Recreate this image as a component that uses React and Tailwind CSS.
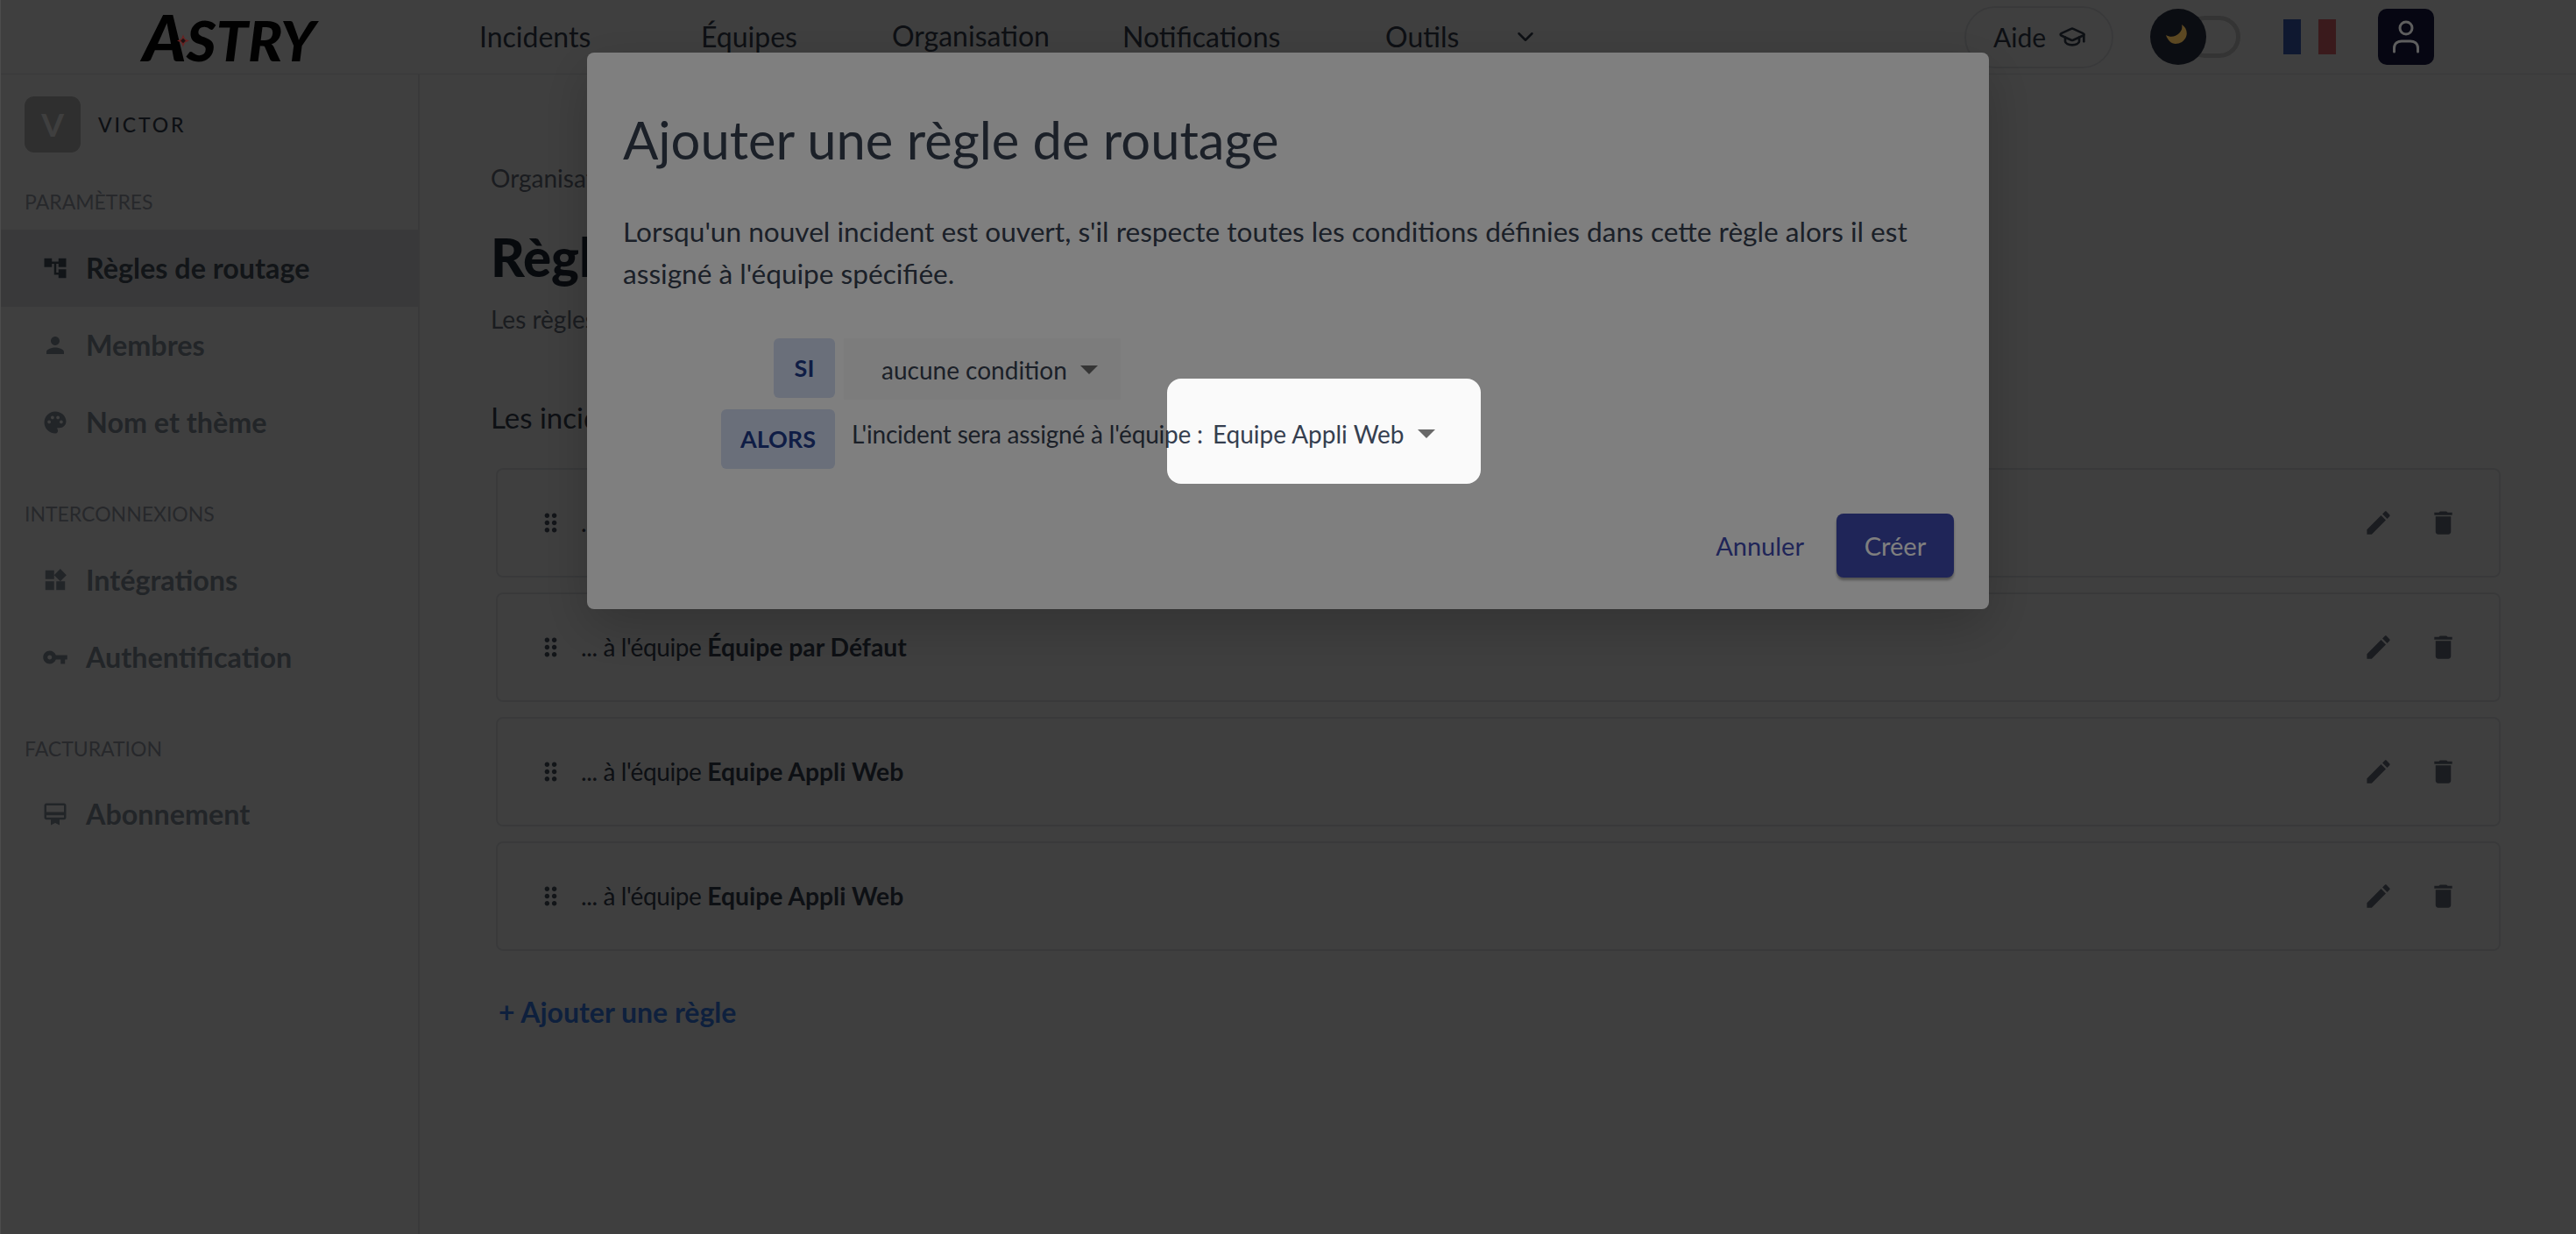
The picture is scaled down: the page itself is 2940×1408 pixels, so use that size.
import { ChevronDown, GraduationCap } from 'lucide-react';

const iconPaths = {
  tree: 'M22 11V3h-7v3H9V3H2v8h7V8h2v10h4v3h7v-8h-7v3h-2V8h2v3z',
  person: 'M12 12c2.21 0 4-1.79 4-4s-1.79-4-4-4-4 1.79-4 4 1.79 4 4 4zm0 2c-2.67 0-8 1.34-8 4v2h16v-2c0-2.66-5.33-4-8-4z',
  palette: 'M12 2C6.49 2 2 6.49 2 12s4.49 10 10 10c1.38 0 2.5-1.12 2.5-2.5 0-.61-.23-1.2-.64-1.67-.08-.1-.13-.21-.13-.33 0-.28.22-.5.5-.5H16c3.31 0 6-2.69 6-6 0-4.96-4.49-9-10-9zm5.5 11c-.83 0-1.5-.67-1.5-1.5s.67-1.5 1.5-1.5 1.5.67 1.5 1.5-.67 1.5-1.5 1.5zm-3-4c-.83 0-1.5-.67-1.5-1.5S13.67 6 14.5 6s1.5.67 1.5 1.5S15.33 9 14.5 9zM5 11.5c0-.83.67-1.5 1.5-1.5s1.5.67 1.5 1.5S7.33 13 6.5 13 5 12.33 5 11.5zm6-4c0 .83-.67 1.5-1.5 1.5S8 8.33 8 7.5 8.67 6 9.5 6s1.5.67 1.5 1.5z',
  widgets: 'M13 13v8h8v-8h-8zM3 21h8v-8H3v8zM3 3v8h8V3H3zm13.66-1.31L11 7.34 16.66 13l5.66-5.66-5.66-5.65z',
  key: 'M12.65 10C11.83 7.67 9.61 6 7 6c-3.31 0-6 2.69-6 6s2.69 6 6 6c2.61 0 4.83-1.67 5.65-4H17v4h4v-4h2v-4H12.65zM7 14c-1.1 0-2-.9-2-2s.9-2 2-2 2 .9 2 2-.9 2-2 2z',
  card: 'M20 2H4c-1.11 0-2 .89-2 2v11c0 1.11.89 2 2 2h4v5l4-2 4 2v-5h4c1.11 0 2-.89 2-2V4c0-1.11-.89-2-2-2zm0 13H4v-2h16v2zm0-5H4V4h16v6z',
  edit: 'M3 17.25V21h3.75L17.81 9.94l-3.75-3.75L3 17.25zM20.71 7.04c.39-.39.39-1.02 0-1.41l-2.34-2.34c-.39-.39-1.02-.39-1.41 0l-1.83 1.83 3.75 3.75 1.83-1.83z',
  trash: 'M6 19c0 1.1.9 2 2 2h8c1.1 0 2-.9 2-2V7H6v12zM19 4h-3.5l-1-1h-5l-1 1H5v2h14V4z',
  drag: 'M11 18c0 1.1-.9 2-2 2s-2-.9-2-2 .9-2 2-2 2 .9 2 2zm-2-8c-1.1 0-2 .9-2 2s.9 2 2 2 2-.9 2-2-.9-2-2-2zm0-6c-1.1 0-2 .9-2 2s.9 2 2 2 2-.9 2-2-.9-2-2-2zm6 4c1.1 0 2-.9 2-2s-.9-2-2-2-2 .9-2 2 .9 2 2 2zm0 2c-1.1 0-2 .9-2 2s.9 2 2 2 2-.9 2-2-.9-2-2-2zm0 6c-1.1 0-2 .9-2 2s.9 2 2 2 2-.9 2-2-.9-2-2-2z',
};

function Icon({ name, className }) {
  return (
    <svg viewBox="0 0 24 24" fill="currentColor" className={className}>
      <path d={iconPaths[name]} />
    </svg>
  );
}

const navItems = [
  { label: 'Incidents', cls: 'w-[253px]' },
  { label: 'Équipes', cls: 'w-[218px]' },
  { label: 'Organisation', cls: 'w-[263px] -translate-y-[1px]' },
  { label: 'Notifications', cls: 'w-[300px]' },
  { label: 'Outils', cls: 'w-[86px]' },
];

const sections = [
  { title: 'PARAMÈTRES', top: 'mt-[43px]', list: 'mt-[19px]', items: [
    { icon: 'tree', label: 'Règles de routage', active: true },
    { icon: 'person', label: 'Membres' },
    { icon: 'palette', label: 'Nom et thème' },
  ] },
  { title: 'INTERCONNEXIONS', top: 'mt-[47px]', list: 'mt-[19px]', items: [
    { icon: 'widgets', label: 'Intégrations' },
    { icon: 'key', label: 'Authentification' },
  ] },
  { title: 'FACTURATION', top: 'mt-[47px]', list: 'mt-[18px]', items: [
    { icon: 'card', label: 'Abonnement' },
  ] },
];

const rules = ['Equipe Appli Web', 'Équipe par Défaut', 'Equipe Appli Web', 'Equipe Appli Web'];

function Logo() {
  return (
    <div className="relative w-[200px] h-[50px] text-[#050505]">
      <span className="block origin-left scale-x-[1.05] italic font-black text-[62px] leading-[50px] whitespace-nowrap first-letter:text-[72px]">ASTRY</span>
      <svg viewBox="0 0 20 20" className="absolute z-10 left-[39px] top-[22px] w-[14px] h-[15px]">
        <path d="M10 0 L13 7 L20 10 L13 13 L10 20 L7 13 L0 10 L7 7 Z" fill="#6a2222" />
        <path d="M10 6 L14 10 L10 14 L6 10 Z" fill="#1a1212" />
      </svg>
    </div>
  );
}

function Header() {
  return (
    <header className="h-[85px] flex items-center border-b border-[#e5e7eb] text-[#374151] text-[32px] shrink-0">
      <div className="w-[547px] pl-[163px] shrink-0">
        <Logo />
      </div>
      <nav className="flex items-center">
        {navItems.map((item) => (
          <span key={item.label} className={`${item.cls} block whitespace-nowrap`}>{item.label}</span>
        ))}
        <ChevronDown className="ml-[59px] w-[30px] h-[30px]" strokeWidth={2} />
      </nav>
      <div className="ml-auto flex items-center">
        <div className="w-[170px] h-[71px] rounded-full border-2 border-[#e5e7eb] flex items-center pl-[31px] gap-[14px] text-[30px]">
          Aide <GraduationCap className="w-[32px] h-[32px]" strokeWidth={2} />
        </div>
        <div className="relative w-[103px] h-[64px] ml-[42px] flex items-center">
          <div className="absolute right-0 w-[64px] h-[48px] rounded-full border-[5px] border-[#d0d0d0]" />
          <div className="absolute left-0 w-[64px] h-[64px] rounded-full bg-[#2c3448] flex items-center justify-center">
            <svg viewBox="0 0 24 22" className="relative z-10 w-[24px] h-[22px] -translate-x-[2px] -translate-y-[3px]" fill="#5c4822">
              <path d="M18 0C23 3 25 9 23 14C21 19 16 22 11 22C6 22 2 18 0 12C5 15 11 14 15 10C18 7 19 4 18 0Z" />
            </svg>
          </div>
        </div>
        <div className="ml-[49px] w-[60px] h-[40px] flex">
          <div className="w-[20px] bg-[#3f60c0]" />
          <div className="w-[20px] bg-white" />
          <div className="w-[20px] bg-[#e86870]" />
        </div>
        <div className="ml-[48px] mr-[162px] w-[64px] h-[64px] rounded-[10px] bg-[#181848] flex items-center justify-center">
          <svg viewBox="0 0 30 38" fill="none" stroke="#5e5e5e" strokeWidth="3" strokeLinecap="round" className="relative z-10 w-[30px] h-[38px]">
            <circle cx="15" cy="9" r="7" />
            <path d="M1.5 36V32C1.5 26 6 24 10 24H20C24 24 28.5 26 28.5 32V36" />
          </svg>
        </div>
      </div>
    </header>
  );
}

function Sidebar() {
  return (
    <aside className="w-[479px] shrink-0 border-r-2 border-[#e5e7eb] text-[#6b7280]">
      <div className="flex items-center pl-[28px] pt-[25px]">
        <div className="w-[64px] h-[64px] rounded-[11px] bg-[#bcbcbc] flex items-center justify-center text-white text-[37px] font-bold">V</div>
        <span className="ml-[20px] text-[#374151] text-[23px] font-medium tracking-[2.8px]">VICTOR</span>
      </div>
      {sections.map((section) => (
        <div key={section.title}>
          <p className={`${section.top} pl-[28px] h-[26px] leading-[26px] text-[23px] text-[#9ca3af]`}>{section.title}</p>
          <div className={section.list}>
            {section.items.map((item) => (
              <div key={item.label} className={`h-[88px] flex items-center pl-[48px] gap-[20px] text-[32.3px] font-bold ${item.active ? 'bg-[#e5e7eb] text-[#4b5563]' : 'text-[#8b95a3]'}`}>
                <Icon name={item.icon} className="w-[30px] h-[30px]" />
                <span>{item.label}</span>
              </div>
            ))}
          </div>
        </div>
      ))}
    </aside>
  );
}

function RuleCard({ team }) {
  return (
    <div className="h-[125px] rounded-[8px] border-2 border-[#e5e7eb] flex items-center pl-[44px] pr-[46px] text-[#374151] text-[28px]">
      <Icon name="drag" className="w-[33px] h-[33px] text-[#4b5563]" />
      <span className="ml-[18px]"><span className="tracking-[-0.4px]">... à l'équipe </span><strong className="font-bold text-[28.3px]">{team}</strong></span>
      <div className="ml-auto flex items-center gap-[39px] text-[#6b7280]">
        <Icon name="edit" className="w-[35px] h-[35px]" />
        <Icon name="trash" className="w-[35px] h-[35px]" />
      </div>
    </div>
  );
}

function Main() {
  return (
    <main className="flex-1 pl-[81px] pr-[86px] pt-[100px] text-[#374151]">
      <p className="text-[28px] text-[#6b7280] leading-[36px]">Organisation / Règles de routage</p>
      <h1 className="mt-[36px] text-[60px] font-black leading-[72px] text-[#1f2937]">Règles de routage</h1>
      <p className="mt-[17px] text-[28px] leading-[36px] text-[#6b7280]">Les règles de routage définissent l'assignation</p>
      <p className="mt-[73px] text-[33px] leading-[42px]">Les incidents sont assignés</p>
      <div className="mt-[37px] ml-[6px] flex flex-col gap-[17px]">
        {rules.map((team, i) => (
          <RuleCard key={i} team={team} />
        ))}
      </div>
      <button className="mt-[46px] ml-[9px] block text-[32px] font-bold text-[#3b82f6]">+ Ajouter une règle</button>
    </main>
  );
}

function Caret({ className }) {
  return (
    <svg viewBox="0 0 20 10" className={className} fill="currentColor">
      <path d="M0 0h20L10 10z" />
    </svg>
  );
}

function RuleModal() {
  return (
    <div className="absolute left-[670px] top-[60px] w-[1600px] h-[635px] rounded-[8px] bg-white px-[41px] pt-[63px] text-[#374151] shadow-[0_20px_60px_rgba(0,0,0,0.2)]">
      <h2 className="text-[59.7px] leading-[72px]">Ajouter une règle de routage</h2>
      <p className="mt-[45px] text-[31.6px] leading-[48px] w-[1510px]">
        Lorsqu'un nouvel incident est ouvert, s'il respecte toutes les conditions définies dans cette règle alors il est assigné à l'équipe spécifiée.
      </p>
      <div className="mt-[50px] ml-[112px] flex flex-col items-start text-[28px]">
        <div className="flex items-start">
          <div className="ml-[60px] w-[70px] h-[68px] rounded-[6px] bg-[#d4dff5] text-[#1e3a8a] font-bold flex items-center justify-center text-[27px]">SI</div>
          <div className="ml-[10px] w-[316px] h-[70px] bg-[#f9f9f9] flex items-center pl-[43px] pt-[2px] gap-[15px]">
            aucune condition <Caret className="w-[20px] h-[10px] text-[#6b6b6b]" />
          </div>
        </div>
        <div className="mt-[11px] flex items-start">
          <div className="w-[130px] h-[68px] rounded-[6px] bg-[#d4dff5] text-[#1e3a8a] font-bold flex items-center justify-center text-[27px]">ALORS</div>
          <div className="ml-[19px] h-[56px] flex items-center whitespace-nowrap">
            <span className="tracking-[-0.2px]">L'incident sera assigné à l'équipe :</span>
            <span className="ml-[11px]">Equipe Appli Web</span>
            <Caret className="ml-[15px] w-[20px] h-[10px] text-[#6b6b6b]" />
          </div>
        </div>
      </div>
      <div className="absolute right-[40px] bottom-[36px] flex items-center gap-[37px] text-[29px]">
        <span className="text-[#3f4ab0]">Annuler</span>
        <button className="w-[134px] h-[73px] rounded-[8px] bg-[#3f4ab0] text-white shadow-[0_3px_3px_rgba(0,0,0,0.35)]">Créer</button>
      </div>
    </div>
  );
}

export default function App() {
  return (
    <div className="relative w-full h-screen overflow-hidden bg-white flex flex-col font-['Lato','Liberation_Sans',sans-serif]">
      <Header />
      <div className="flex flex-1">
        <Sidebar />
        <Main />
      </div>
      {/* dialog backdrop */}
      <div className="absolute inset-0 bg-black/50" />
      <RuleModal />
      {/* tour spotlight on the team select */}
      <div className="absolute left-[1332px] top-[432px] w-[358px] h-[120px] rounded-[16px] bg-black/[0.02] shadow-[0_0_0_4000px_rgba(0,0,0,0.5)]" />
      <div className="absolute left-0 inset-y-0 w-px bg-[#4d4d4d]" />
    </div>
  );
}
